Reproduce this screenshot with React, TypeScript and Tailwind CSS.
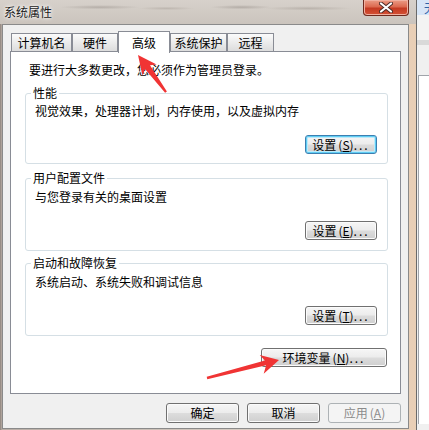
import type { ReactNode } from 'react'

const BTN_GRAD =
  'bg-[linear-gradient(to_bottom,#f6f6f6_0%,#ececec_48%,#dcdcdc_52%,#cfcfcf_100%)]'

function WinButton({
  className = '',
  variant = 'normal',
  children,
}: {
  className?: string
  variant?: 'normal' | 'focus' | 'disabled'
  children: ReactNode
}) {
  const look =
    variant === 'focus'
      ? `border-[#3c7fb1] ${BTN_GRAD} shadow-[inset_0_0_0_1px_#5fcdf3,inset_0_0_0_2px_#bfe9f9] text-black`
      : variant === 'disabled'
        ? 'border-[#adb2b5] bg-[#f4f4f4] text-[#8b8b8b]'
        : `border-[#707070] ${BTN_GRAD} shadow-[inset_0_0_0_1px_#fbfbfb] text-black`
  return (
    <button
      type="button"
      className={`flex items-center justify-center rounded-[3px] border text-[12px] leading-none ${look} ${className}`}
    >
      {children}
    </button>
  )
}

function Key({ k }: { k: string }) {
  return (
    <span className="ml-[2px]">
      (<span className="underline underline-offset-1">{k}</span>)
    </span>
  )
}

function Dots() {
  return <span className="tracking-[2px]">...</span>
}

function Group({
  title,
  desc,
  btn,
  className,
  descClass,
  padClass,
  focus,
}: {
  title: string
  desc: string
  btn: ReactNode
  className: string
  descClass: string
  padClass: string
  focus?: boolean
}) {
  return (
    <fieldset className={`ml-[14px] mr-[12px] rounded-[3px] border border-[#d5dfe5] ${className} ${padClass}`}>
      <legend className="ml-[5px] px-[2px] text-[12px] leading-[14px]">{title}</legend>
      <p className={`pl-[9px] text-[12px] leading-[14px] ${descClass}`}>{desc}</p>
      <div className="mt-[17px] flex justify-end pr-[10px]">
        <WinButton variant={focus ? 'focus' : 'normal'} className="h-[19px] w-[72px]">
          {btn}
        </WinButton>
      </div>
    </fieldset>
  )
}

const tabs = [
  { label: '计算机名', w: 'w-[61px]' },
  { label: '硬件', w: 'w-[46px]' },
  { label: '高级', w: 'w-[52px]', active: true },
  { label: '系统保护', w: 'w-[57px]' },
  { label: '远程', w: 'w-[47px]' },
]

export default function App() {
  return (
    <div className="relative flex h-[430px] w-[429px] overflow-hidden bg-[#8d827b] font-['Noto_Sans_CJK_SC',sans-serif] text-black">
      {/* main dialog window */}
      <div className="flex w-[416px] flex-col bg-[linear-gradient(to_right,#8d827b_0px,#b9aea6_2px,#d8cdc3_60%,#e9cfb6_100%)]">
        {/* title bar */}
        <div className="flex h-[24px] items-start bg-[radial-gradient(ellipse_at_24%_30%,#b5aea8_0%,transparent_9%),radial-gradient(ellipse_at_40%_35%,#bdb6af_0%,transparent_8%),radial-gradient(ellipse_at_58%_30%,#b3aca6_0%,transparent_9%),radial-gradient(ellipse_at_74%_35%,#b9b2ab_0%,transparent_10%),linear-gradient(to_bottom,#d7d1cb,#cbc4bd)]">
          <span className="ml-[4px] mt-[5px] text-[12px] leading-[14px] text-[#1b1b1b] [text-shadow:0_0_5px_#ffffff,0_0_3px_#ffffff]">
            系统属性
          </span>
          <div className="flex-1" />
          <div className="mr-[7px] flex h-[16px] w-[46px] items-center justify-center rounded-b-[4px] border border-t-0 border-[#6e2a1e] bg-[linear-gradient(to_bottom,#eb9c86_0%,#dc6a50_45%,#c43a22_55%,#d45236_100%)] shadow-[inset_0_0_0_1px_#f0b0a0]">
            <svg width="14" height="11" viewBox="0 0 14 11" aria-hidden="true">
              <path d="M2 1.5L12 9.5M12 1.5L2 9.5" stroke="#4a2a26" strokeWidth="4" strokeLinecap="round" />
              <path d="M2 1.5L12 9.5M12 1.5L2 9.5" stroke="#ffffff" strokeWidth="2.2" strokeLinecap="round" />
            </svg>
          </div>
        </div>

        {/* dialog body */}
        <div className="mb-[1px] ml-[2px] mr-[7px] flex flex-1 flex-col border border-[#8a8a8a] bg-[#f0f0f0] pb-[5px] pl-[7px] pr-[7px] pt-[6px]">
          {/* tabs */}
          <div className="ml-[1px] flex h-[20px] items-end">
            {tabs.map((t) =>
              t.active ? (
                <div
                  key={t.label}
                  className={`relative z-10 mb-[-2px] flex h-[22px] items-center justify-center border border-b-0 border-[#898c95] bg-white text-[12px] leading-none ${t.w}`}
                >
                  {t.label}
                </div>
              ) : (
                <div
                  key={t.label}
                  className={`flex h-[18px] items-center justify-center border border-b-0 border-[#898c95] bg-[linear-gradient(to_bottom,#fbfbfb,#dcdcdc)] pt-[1px] text-[12px] leading-none ${t.w}`}
                >
                  {t.label}
                </div>
              ),
            )}
          </div>

          {/* tab panel */}
          <div className="flex h-[343px] flex-col border border-[#898c95] bg-white">
            <p className="mt-[11px] pl-[18px] text-[12px] leading-[14px]">
              要进行大多数更改，您必须作为管理员登录。
            </p>

            <Group
              title="性能"
              desc="视觉效果，处理器计划，内存使用，以及虚拟内存"
              btn={<>设置<Key k="S" /><Dots /></>}
              className="mt-[9px]"
              descClass="mt-[4px]"
              padClass="pb-[9px]"
              focus
            />
            <Group
              title="用户配置文件"
              desc="与您登录有关的桌面设置"
              btn={<>设置<Key k="E" /><Dots /></>}
              className="mt-[7px]"
              descClass="mt-[5px]"
              padClass="pb-[10px]"
            />
            <Group
              title="启动和故障恢复"
              desc="系统启动、系统失败和调试信息"
              btn={<>设置<Key k="T" /><Dots /></>}
              className="mt-[5px]"
              descClass="mt-[5px]"
              padClass="pb-[10px]"
            />

            <div className="mt-[12px] flex justify-end pr-[13px]">
              <WinButton className="h-[19px] w-[126px]">
                环境变量<Key k="N" /><Dots />
              </WinButton>
            </div>
          </div>

          {/* dialog buttons */}
          <div className="mt-[9px] flex h-[20px] justify-end gap-[8px]">
            <WinButton className="h-[20px] w-[73px]">确定</WinButton>
            <WinButton className="h-[20px] w-[73px]">取消</WinButton>
            <WinButton variant="disabled" className="h-[20px] w-[73px]">
              应用<Key k="A" />
            </WinButton>
          </div>
        </div>
      </div>

      {/* edge of the window behind */}
      <div className="w-[1px] bg-[#6a6a6a]" />
      <div className="flex w-[12px] flex-col bg-[#f0f0f0]">
        <div className="h-[15px] overflow-hidden bg-[#d6e5f7] pl-[7px] pt-[2px] text-[12px] leading-[12px] text-[#2f62a8]">
          无
        </div>
        <div className="h-[25px] bg-[#f3f3f3]" />
        <div className="h-[5px] bg-[#d9d9d9]" />
        <div className="h-[30px]" />
        <div className="ml-[1px] flex-1 border-l border-t border-[#a0a4aa] bg-white" />
        <div className="h-[6px]" />
      </div>

      {/* red annotation arrows */}
      <svg className="pointer-events-none absolute inset-0" width="429" height="430" viewBox="0 0 429 430" aria-hidden="true">
        <polygon
          points="138,55 156.6,64.6 150,65.3 166.9,91.6 165.1,92.8 145.2,69.2 142.4,75.5"
          fill="#f03434"
        />
        <polygon
          points="279,360 259.7,355 264.9,360.4 206.7,376.8 207.3,379.2 266.1,365.3 263.7,373.8"
          fill="#f03434"
        />
      </svg>
    </div>
  )
}
